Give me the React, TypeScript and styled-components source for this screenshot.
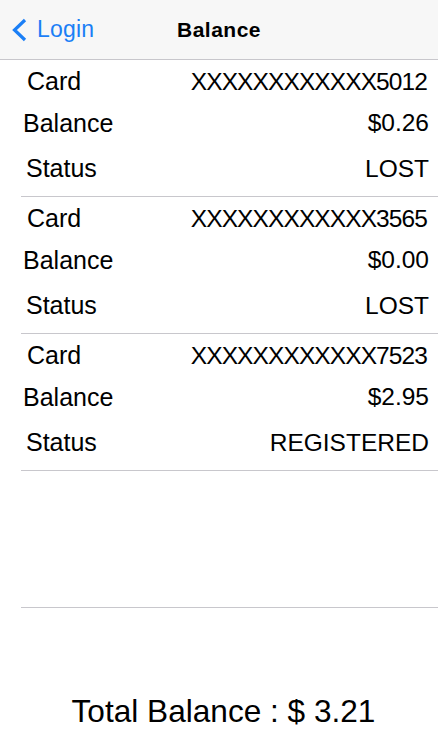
import React from "react";
import styled, { createGlobalStyle } from "styled-components";

const Global = createGlobalStyle`
  html, body { margin: 0; padding: 0; background: #ffffff; }
  body { font-family: "Liberation Sans", Arial, Helvetica, sans-serif; color: #000; overflow: hidden; }
  * { box-sizing: border-box; }
`;

const Page = styled.div`
  width: 438px;
  height: 750px;
  display: flex;
  flex-direction: column;
  background: #fff;
`;

const NavBar = styled.header`
  height: 60px;
  background: #f7f7f7;
  border-bottom: 1px solid #c8c7cc;
  display: grid;
  grid-template-columns: 1fr auto 1fr;
  align-items: center;
`;

const BackButton = styled.div`
  display: flex;
  align-items: center;
  gap: 10px;
  padding-left: 11px;
  color: #1b7ff6;
  font-size: 23px;
  letter-spacing: 0.2px;
`;

const Title = styled.div`
  font-size: 21px;
  font-weight: 700;
  letter-spacing: 0.5px;
  padding-top: 1px;
`;

const List = styled.div`
  margin-left: 21px;
  display: flex;
  flex-direction: column;
`;

const Block = styled.section`
  height: 137px;
  padding-bottom: 2px;
  border-bottom: 1px solid #c8c7cc;
  display: flex;
  flex-direction: column;
`;

const Row = styled.div<{ $h: number }>`
  height: ${(p) => p.$h}px;
  line-height: ${(p) => p.$h}px;
  display: flex;
  justify-content: space-between;
  padding-right: 9px;
`;

const Label = styled.span<{ $indent: number }>`
  font-size: 25px;
  padding-left: ${(p) => p.$indent}px;
`;

const Value = styled.span<{ $tight?: boolean }>`
  font-size: 24.5px;
  letter-spacing: ${(p) => (p.$tight ? "-0.9px" : "0")};
  margin-right: ${(p) => (p.$tight ? "2px" : "0")};
`;

const Footer = styled.div`
  padding-top: 86px;
  padding-left: 9px;
  text-align: center;
  font-size: 31.6px;
  line-height: 35px;
`;

const cards = [
  { card: "XXXXXXXXXXXX5012", balance: "$0.26", status: "LOST" },
  { card: "XXXXXXXXXXXX3565", balance: "$0.00", status: "LOST" },
  { card: "XXXXXXXXXXXX7523", balance: "$2.95", status: "REGISTERED" },
];

export default function App() {
  return (
    <Page>
      <Global />
      <NavBar>
        <BackButton>
          <svg width="16" height="24" viewBox="0 0 16 24" fill="none">
            <path d="M14 2 L3.5 12 L14 22" stroke="#1b7ff6" strokeWidth="3.2" strokeLinejoin="miter" />
          </svg>
          <span>Login</span>
        </BackButton>
        <Title>Balance</Title>
        <div />
      </NavBar>
      <List>
        {cards.map((c) => (
          <Block key={c.card}>
            <Row $h={43}>
              <Label $indent={6}>Card</Label>
              <Value $tight>{c.card}</Value>
            </Row>
            <Row $h={40}>
              <Label $indent={2}>Balance</Label>
              <Value>{c.balance}</Value>
            </Row>
            <Row $h={51}>
              <Label $indent={5}>Status</Label>
              <Value>{c.status}</Value>
            </Row>
          </Block>
        ))}
        <Block />
      </List>
      <Footer>Total Balance : $ 3.21</Footer>
    </Page>
  );
}
